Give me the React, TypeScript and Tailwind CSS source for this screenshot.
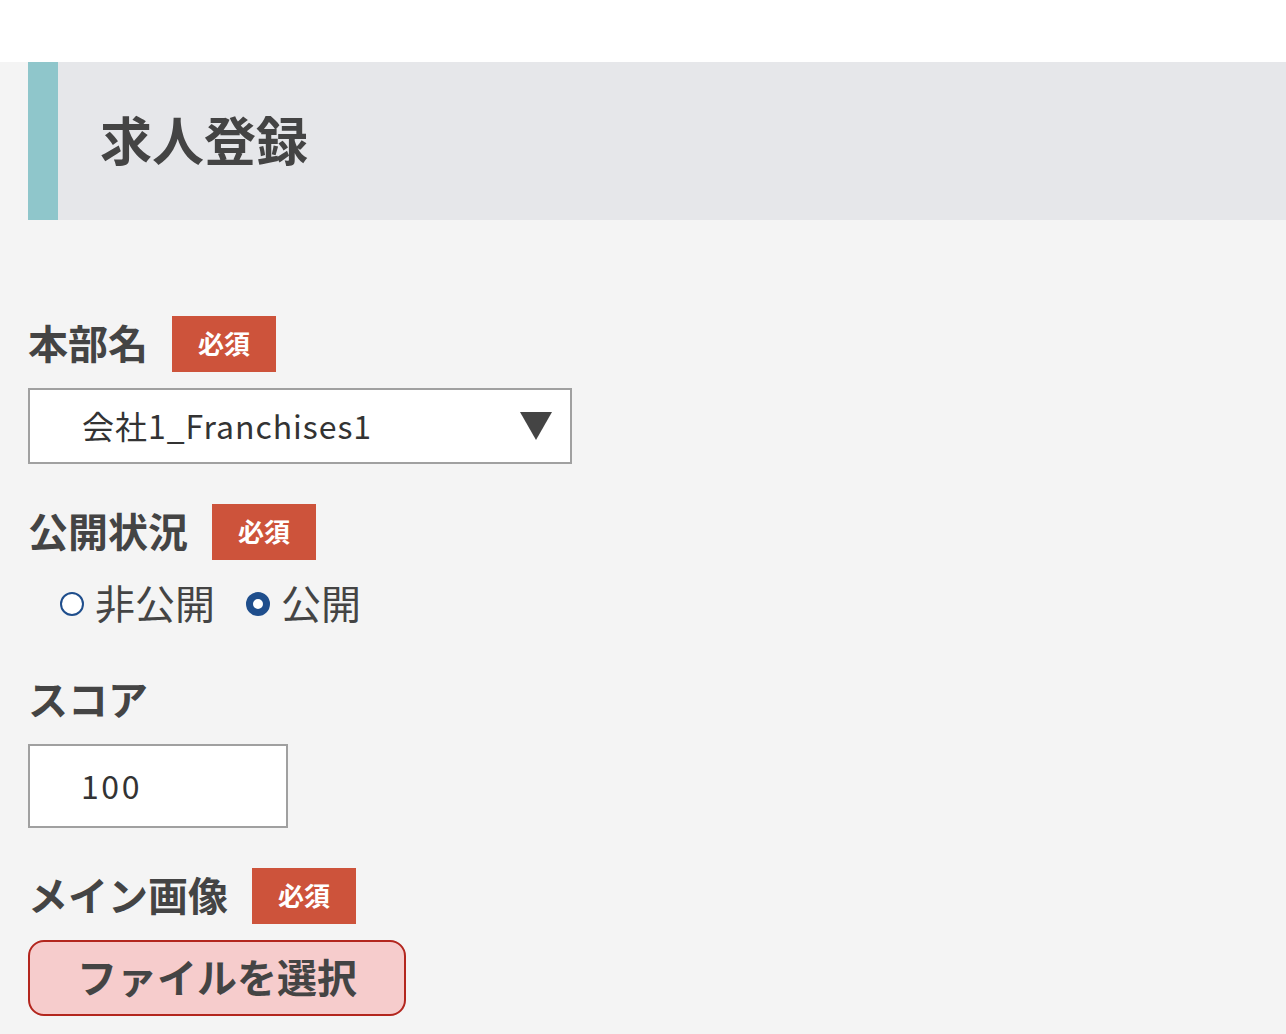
import React from "react";

const font = { fontFamily: '"Noto Sans CJK JP", "Noto Sans", sans-serif' };

function Badge() {
  return (
    <span className="flex h-[56px] w-[104px] items-center justify-center bg-[#cd533b] pb-[2px] text-[26px] font-bold leading-none text-white">
      必須
    </span>
  );
}

function Label({ text, required }: { text: string; required?: boolean }) {
  return (
    <div className="flex h-[56px] items-center gap-[24px]">
      <span className="pb-[5px] text-[40px] font-bold leading-none text-[#444]">{text}</span>
      {required && <Badge />}
    </div>
  );
}

function Radio({ checked, text }: { checked?: boolean; text: string }) {
  return (
    <label className="flex items-center gap-[11px]">
      <span
        className={
          checked
            ? "box-border h-[24px] w-[24px] rounded-full border-[7px] border-[#1f4e8c] bg-white"
            : "box-border h-[24px] w-[24px] rounded-full border-[2px] border-[#1f4e8c] bg-white"
        }
      />
      <span className="pb-[4px] text-[40px] leading-none text-[#444]">{text}</span>
    </label>
  );
}

export default function App() {
  return (
    <div style={font} className="min-h-[1034px] bg-[#f4f4f4]">
      <div className="h-[62px] bg-white" />
      <div className="pl-[28px]">
        <div className="flex h-[158px] items-center border-l-[30px] border-[#8fc6cb] bg-[#e6e7ea] pl-[42px]">
          <h1 className="pb-[5px] text-[52px] font-bold leading-none text-[#444]">求人登録</h1>
        </div>

        <div className="pt-[96px]">
          <Label text="本部名" required />
          <div className="mt-[16px] box-border flex h-[76px] w-[544px] items-center justify-between border-2 border-[#a0a0a0] bg-white pl-[52px] pr-[18px]">
            <span className="pb-[3px] text-[32px] leading-none tracking-[0.03em] text-[#333]">会社1_Franchises1</span>
            <svg width="32" height="28" viewBox="0 0 32 28">
              <polygon points="0,0 32,0 16,28" fill="#444" />
            </svg>
          </div>

          <div className="mt-[40px]">
            <Label text="公開状況" required />
          </div>
          <div className="mt-[14px] flex h-[60px] items-center gap-[31px] pl-[32px]">
            <Radio text="非公開" />
            <Radio text="公開" checked />
          </div>

          <div className="mt-[38px]">
            <Label text="スコア" />
          </div>
          <div className="mt-[16px] box-border flex h-[84px] w-[260px] items-center border-2 border-[#a0a0a0] bg-white pl-[51px]">
            <span className="pb-[3px] text-[32px] leading-none tracking-[0.08em] text-[#333]">100</span>
          </div>

          <div className="mt-[40px]">
            <Label text="メイン画像" required />
          </div>
          <button className="mt-[16px] box-border flex h-[76px] w-[378px] items-center justify-center rounded-[16px] border-2 border-[#b3261e] bg-[#f6cccc] pb-[4px] text-[40px] font-bold leading-none text-[#444]">
            ファイルを選択
          </button>
        </div>
      </div>
    </div>
  );
}
